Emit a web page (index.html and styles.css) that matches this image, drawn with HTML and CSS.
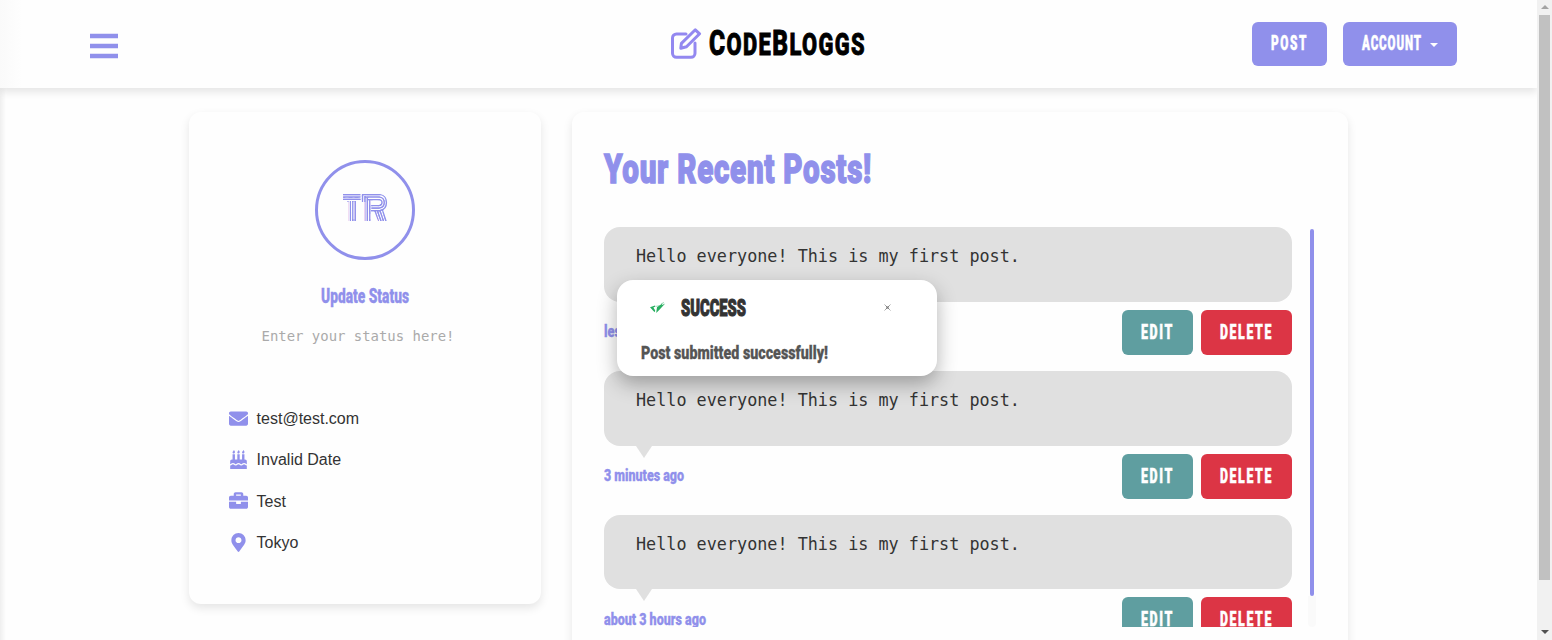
FILE: index.html
```html
<!DOCTYPE html>
<html lang="en">
<head>
<meta charset="utf-8">
<title>CodeBloggs</title>
<link rel="stylesheet" href="styles.css">
</head>
<body>
<div class="window">
  <div class="page">
    <header class="navbar">
      <svg class="menu" width="28" height="26" viewBox="0 0 28 26"><path d="M0 3h28M0 13h28M0 23h28"/></svg>
      <div class="brand">
        <svg class="brand-icon" width="32" height="32" viewBox="0 0 32 32"><path d="M16 6H6.5a4 4 0 0 0-4 4V25.3a4 4 0 0 0 4 4H21a4 4 0 0 0 4-4V15"/><path d="M25.3 1.8 29.6 5.8 16.5 18.8 10.8 20.2 11.4 15.4Z"/></svg>
        <svg class="brand-name" width="158" height="32"><text x="0" y="27.3" textLength="157" lengthAdjust="spacingAndGlyphs">C<tspan class="small">ODE</tspan>B<tspan class="small">LOGGS</tspan></text></svg>
      </div>
      <nav class="actions">
        <div class="btn post"><svg class="label" width="36" height="20"><text x="0" y="17" textLength="37" lengthAdjust="spacingAndGlyphs">POST</text></svg></div>
        <div class="btn account"><svg class="label" width="60" height="20"><text x="0" y="17" textLength="60" lengthAdjust="spacingAndGlyphs">ACCOUNT</text></svg><span class="caret"></span></div>
      </nav>
    </header>
    <main class="content">
      <section class="card profile">
        <div class="avatar">
          <svg width="46" height="28" viewBox="0 0 46 28">
            <defs>
              <pattern id="lines" x="-2" y="-2" width="50" height="32" viewBox="-2 -2 50 32" patternUnits="userSpaceOnUse">
                <path class="stripe" d="M1 1.5h17.500M1 4h17.500M1 6.4h17.500M6 8v20M8.400 8v20M10.800 8v20M13.200 8v20M20.500 1v27M22.900 3v25M25.300 5v23M27.700 7v21M20 1.500h18q6.500 1 6.500 8t-6.500 8h-9M22.900 4h14.500q4.800.8 4.800 5.500t-4.800 5.500h-8M25.300 6.500h12q2.800.5 2.800 3t-2.800 3h-8M33 18l3.500 10M35.500 18l3.500 10M38 18l3.500 10M40.500 17l3.500 11"/>
              </pattern>
            </defs>
            <text class="initials" x="0.5" y="27.5" textLength="45" lengthAdjust="spacingAndGlyphs">TR</text>
          </svg>
        </div>
        <svg class="update" width="88" height="22"><text x="0" y="17" textLength="88" lengthAdjust="spacingAndGlyphs">Update Status</text></svg>
        <div class="status">Enter your status here!</div>
        <ul class="info">
          <li><svg viewBox="0 0 512 512"><path d="M502.3 190.8c3.9-3.1 9.7-.2 9.7 4.7V400c0 26.5-21.5 48-48 48H48c-26.5 0-48-21.5-48-48V195.6c0-5 5.7-7.8 9.7-4.7 22.4 17.4 52.1 39.5 154.1 113.6 21.1 15.4 56.7 47.8 92.2 47.6 35.7.3 72-32.8 92.3-47.6 102-74.1 131.6-96.3 154-113.7zM256 320c23.2.4 56.6-29.2 73.4-41.4 132.7-96.3 142.8-104.7 173.4-128.7 5.8-4.5 9.2-11.5 9.2-18.9v-19c0-26.5-21.5-48-48-48H48c-26.5 0-48 21.5-48 48v19c0 7.4 3.4 14.3 9.2 18.9 30.6 23.9 40.7 32.4 173.4 128.7 16.8 12.2 50.2 41.8 73.4 41.4z"/></svg>test@test.com</li>
          <li><svg viewBox="-32 0 512 512"><path d="M448 384c-28.02 0-31.26-32-74.5-32-43.43 0-46.825 32-74.75 32-27.695 0-31.454-32-74.75-32-42.842 0-47.218 32-74.5 32-28.148 0-31.202-32-74.75-32-43.547 0-46.653 32-74.75 32v-80c0-26.5 21.5-48 48-48h16V112h64v144h64V112h64v144h64V112h64v144h16c26.5 0 48 21.5 48 48v80zm0 128H0v-96c43.356 0 46.767-32 74.75-32 27.951 0 31.253 32 74.75 32 42.843 0 47.217-32 74.5-32 28.148 0 31.201 32 74.75 32 43.357 0 46.767-32 74.75-32 27.488 0 31.252 32 74.5 32v96zM96 96c-17.75 0-32-14.25-32-32 0-31 32-23 32-64 12 0 32 29.5 32 56s-14.25 40-32 40zm128 0c-17.75 0-32-14.25-32-32 0-31 32-23 32-64 12 0 32 29.5 32 56s-14.25 40-32 40zm128 0c-17.75 0-32-14.25-32-32 0-31 32-23 32-64 12 0 32 29.5 32 56s-14.25 40-32 40z"/></svg>Invalid Date</li>
          <li><svg viewBox="0 0 512 512"><path d="M320 336c0 8.84-7.16 16-16 16h-96c-8.84 0-16-7.16-16-16v-48H0v144c0 25.6 22.4 48 48 48h416c25.6 0 48-22.4 48-48V288H320v48zm144-208h-80V80c0-25.6-22.4-48-48-48H176c-25.6 0-48 22.4-48 48v48H48c-25.6 0-48 22.4-48 48v80h512v-80c0-25.6-22.4-48-48-48zm-144 0H192V96h128v32z"/></svg>Test</li>
          <li><svg viewBox="-64 0 512 512"><path d="M172.268 501.67C26.97 291.031 0 269.413 0 192 0 85.961 85.961 0 192 0s192 85.961 192 192c0 77.413-26.97 99.031-172.268 309.67-9.535 13.774-29.93 13.773-39.464 0zM192 272c44.183 0 80-35.817 80-80s-35.817-80-80-80-80 35.817-80 80 35.817 80 80 80z"/></svg>Tokyo</li>
        </ul>
      </section>
      <section class="card posts">
        <svg class="title" width="270" height="44"><text x="0" y="35" textLength="268" lengthAdjust="spacingAndGlyphs">Your Recent Posts!</text></svg>
        <div class="feed">
          <div class="list">
            <article class="post-item">
              <div class="bubble">Hello everyone! This is my first post.</div>
              <div class="row">
                <svg class="time" width="150" height="20"><text x="0" y="15" textLength="130" lengthAdjust="spacingAndGlyphs">less than a minute ago</text></svg>
                <div class="btn edit"><svg class="label" width="32" height="20"><text x="0" y="17" textLength="33" lengthAdjust="spacingAndGlyphs">EDIT</text></svg></div>
                <div class="btn delete"><svg class="label" width="52" height="20"><text x="0" y="17" textLength="53" lengthAdjust="spacingAndGlyphs">DELETE</text></svg></div>
              </div>
            </article>
            <article class="post-item">
              <div class="bubble">Hello everyone! This is my first post.</div>
              <div class="row">
                <svg class="time" width="150" height="20"><text x="0" y="15" textLength="80" lengthAdjust="spacingAndGlyphs">3 minutes ago</text></svg>
                <div class="btn edit"><svg class="label" width="32" height="20"><text x="0" y="17" textLength="33" lengthAdjust="spacingAndGlyphs">EDIT</text></svg></div>
                <div class="btn delete"><svg class="label" width="52" height="20"><text x="0" y="17" textLength="53" lengthAdjust="spacingAndGlyphs">DELETE</text></svg></div>
              </div>
            </article>
            <article class="post-item">
              <div class="bubble">Hello everyone! This is my first post.</div>
              <div class="row">
                <svg class="time" width="150" height="20"><text x="0" y="15" textLength="102" lengthAdjust="spacingAndGlyphs">about 3 hours ago</text></svg>
                <div class="btn edit"><svg class="label" width="32" height="20"><text x="0" y="17" textLength="33" lengthAdjust="spacingAndGlyphs">EDIT</text></svg></div>
                <div class="btn delete"><svg class="label" width="52" height="20"><text x="0" y="17" textLength="53" lengthAdjust="spacingAndGlyphs">DELETE</text></svg></div>
              </div>
            </article>
          </div>
          <div class="track"><div class="thumb"></div></div>
        </div>
      </section>
    </main>
    <div class="edge"></div>
    <div class="toast">
      <div class="toast-head">
        <svg class="check" width="16" height="12" viewBox="0 0 16 12"><path d="M0 5.2 5 3.6 5.5 4.5 3.4 5.6 5.2 8.6 4.6 10.3ZM6.2 11 7 5.2 12.6 1.2 11.6 3.2 15.2 1.4 9.2 8Z"/><path class="thin" d="M6 4.4 9.5 3.6M11 2 14 .4"/></svg>
        <svg class="toast-title" width="66" height="24"><text x="0" y="19.5" textLength="65" lengthAdjust="spacingAndGlyphs">SUCCESS</text></svg>
        <svg class="close" width="7" height="7" viewBox="0 0 7 7"><path d="M.5.5 6.5 6.5M6.5.5.5 6.5"/><path class="core" d="M2.3 2.3 4.7 4.7M4.7 2.3 2.3 4.7"/></svg>
      </div>
      <svg class="toast-text" width="190" height="24"><text x="0" y="18" textLength="187" lengthAdjust="spacingAndGlyphs">Post submitted successfully!</text></svg>
    </div>
  </div>
  <div class="scrollbar">
    <span class="arrow up"></span>
    <div class="scroll-thumb"></div>
    <span class="arrow down"></span>
  </div>
</div>
</body>
</html>
```
FILE: styles.css
```css
* { box-sizing: border-box; }
body {
  margin: 0;
  background: #fefefe;
  color: #333;
  font: 16px "Liberation Sans", Arial, sans-serif;
}
svg { display: block; flex: none; overflow: visible; }
svg text { font-family: Roboto, "Liberation Sans", sans-serif; font-weight: 900; }

.window { display: flex; width: 1552px; height: 640px; overflow: hidden; }
.page { position: relative; width: 1537px; height: 640px; overflow: hidden; }

.navbar {
  position: relative;
  display: grid;
  grid-template-columns: 1fr auto 1fr;
  height: 88px;
  padding: 0 80px 0 90px;
  background: linear-gradient(90deg, #fafafa, #fefefe 22px);
  box-shadow: 0 4px 8px rgba(0, 0, 0, .1);
}
.menu { margin-top: 33px; stroke: #9090eb; stroke-width: 4.5; }
.brand { display: flex; margin: 28px 0 0 -10px; gap: 7px; }
.brand-icon { fill: none; stroke: #9388f0; stroke-width: 3; stroke-linejoin: round; stroke-linecap: round; }
.brand-name { fill: #000; font-size: 35px; }
.brand-name text { font-weight: 800; letter-spacing: 2px; stroke: #000; stroke-width: 1; }
.brand-name .small { font-size: 31px; }
.actions { display: flex; justify-content: flex-end; gap: 16px; padding-top: 22px; }

.btn {
  display: flex;
  align-items: flex-start;
  height: 45px;
  padding: 12px 19px 0;
  border-radius: 6px;
  background: #9090eb;
}
.label { fill: #fff; font-size: 19.5px; }
.label text { letter-spacing: 2.6px; stroke: #fff; stroke-width: .5; }
.navbar .btn { height: 44px; padding-top: 11px; }
.post { width: 75px; }
.account { width: 114px; }
.account .label text { letter-spacing: 1.5px; }
.caret {
  margin: 10px 0 0 8px;
  border: 4px solid transparent;
  border-top-color: #fff;
  border-bottom: 0;
}

.content { display: flex; align-items: flex-start; gap: 31px; padding: 24px 0 0 189px; }
.card { border-radius: 12px; background: #fefefe; box-shadow: 0 4px 10px rgba(0, 0, 0, .1); }
.profile { width: 352px; height: 492px; padding-top: 48px; }
.avatar {
  display: flex;
  justify-content: center;
  width: 100px;
  height: 100px;
  margin: 0 auto;
  padding-top: 30px;
  border: 3px solid #9090eb;
  border-radius: 50%;
}
.initials { fill: url(#lines); stroke: url(#lines); stroke-width: 4; font-size: 37.5px; }
.avatar svg { overflow: hidden; }
.stripe { fill: none; stroke: #9090eb; stroke-width: 1.25; }
.update { margin: 26px auto 0; fill: #9090eb; font-size: 19.5px; }
.update text, .time text { stroke: #9090eb; stroke-width: .3; }
.status {
  margin-top: 20px;
  padding-left: 72.5px;
  color: #aaa;
  font: 13.95px/16px "DejaVu Sans Mono", monospace;
}
.info { display: grid; gap: 17.4px; margin: 63px 0 0; padding: 0 0 0 40px; list-style: none; }
.info li { display: flex; align-items: center; gap: 8.6px; height: 24px; }
.info svg { width: 19px; height: 19px; margin-bottom: 2px; fill: #9090eb; }

.posts { width: 776px; height: 640px; padding: 36px 32px; }
.title { margin: 0; fill: #9090eb; font-size: 41px; }
.title text { letter-spacing: 1px; stroke: #9090eb; stroke-width: 1.4; }
.feed { display: flex; justify-content: space-between; width: 716px; height: 400px; margin-top: 35px; overflow: hidden; }
.list { width: 688px; }
.post-item { height: 143.8px; }
.bubble {
  position: relative;
  height: 74.8px;
  margin-bottom: 8px;
  padding: 18px 32px;
  border-radius: 16px;
  background: #e0e0e0;
  font: 16.8px/22px "DejaVu Sans Mono", monospace;
}
.bubble::after {
  content: "";
  position: absolute;
  top: 100%;
  left: 32px;
  border: 8px solid transparent;
  border-top: 12px solid #e0e0e0;
  border-bottom: 0;
}
.row { display: flex; gap: 8px; }
.time { margin: 12.4px auto 0 0; fill: #9090eb; font-size: 16.5px; }
.edit { width: 71px; background: #5f9ea0; }
.delete { width: 91px; background: #dc3545; }
.track {
  width: 8px;
  height: 400px;
  margin-right: 4px;
  padding: 2px;
  border-radius: 4px;
  background: linear-gradient(#fefefe 369px, #fafafa 369px);
}
.thumb { height: 367px; border-radius: 2px; background: #9090eb; }

.edge {
  position: absolute;
  top: 88px;
  bottom: 0;
  left: 0;
  width: 6px;
  background: linear-gradient(90deg, rgba(0, 0, 0, .06), transparent);
}

.toast {
  position: absolute;
  top: 280px;
  left: 617px;
  width: 320px;
  height: 96px;
  padding: 16px 24px;
  border-radius: 16px;
  background: #fff;
  box-shadow: 0 8px 20px rgba(0, 0, 0, .3);
}
.toast-head { display: flex; height: 24px; padding-left: 9px; }
.check { margin: 6px 15px 0 0; fill: #27ae60; }
.check .thin { stroke: #27ae60; stroke-width: .7; opacity: .6; }
.toast-title { fill: #333; font-size: 24px; }
.toast-title text { stroke: #333; stroke-width: 1.1; }
.close { margin: 8px 0 0 136.5px; stroke: #aaa; stroke-width: 1; }
.close .core { stroke: #777; stroke-width: 1.2; }
.toast-text { margin-top: 21px; fill: #555; font-size: 19px; }
.toast-text text { stroke: #555; stroke-width: .3; }

.scrollbar { display: flex; flex-direction: column; align-items: center; width: 15px; background: #f1f1f1; }
.arrow { border: 4px solid transparent; }
.up { margin-top: 5px; border-top: 0; border-bottom-color: #a3a3a3; }
.scroll-thumb { width: 11px; height: 565px; margin-top: 6px; background: #c1c1c1; }
.down { margin-top: 50px; border-bottom: 0; border-top-color: #505050; }
```
